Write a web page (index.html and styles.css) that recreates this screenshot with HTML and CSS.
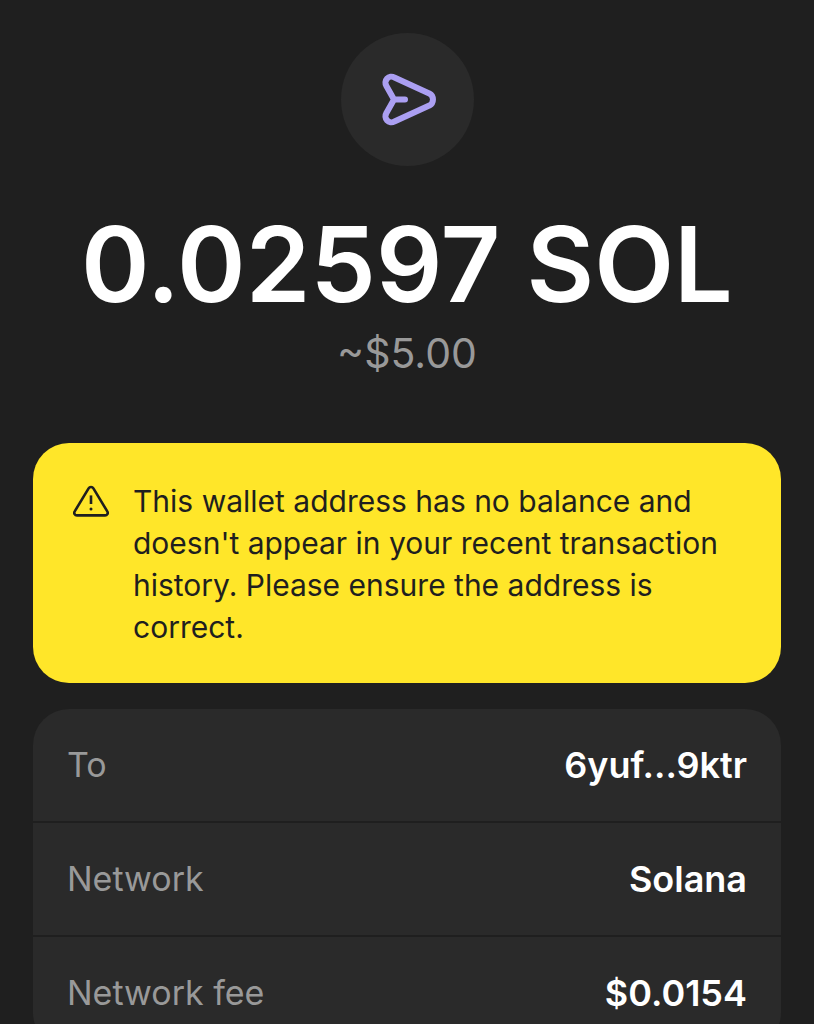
FILE: index.html
```html
<!DOCTYPE html>
<html lang="en">
<head>
<meta charset="utf-8">
<meta name="viewport" content="width=device-width, initial-scale=1">
<title>Send SOL</title>
<link rel="stylesheet" href="styles.css">
</head>
<body>
<main class="send">
  <div class="badge">
    <svg class="badge-icon" viewBox="0 0 60 60" aria-hidden="true">
      <path d="M17 29.500L9.400 16A6 6 0 0 1 17.400 7.500L52.300 23.400A6.900 6.900 0 0 1 52.300 35.600L17.400 51.500A6 6 0 0 1 9.400 43ZM17 29.500H28"/>
    </svg>
  </div>
  <h1 class="amount">0.02597 SOL</h1>
  <p class="fiat">~$5.00</p>
  <section class="warning" role="alert">
    <svg class="warning-icon" viewBox="0 0 36 36" aria-hidden="true">
      <path d="M15.600 4.400A2.800 2.800 0 0 1 20.400 4.400L34.300 27.400A2.600 2.600 0 0 1 32.100 31.400H3.900A2.600 2.600 0 0 1 1.700 27.400Z"/>
      <path class="mark" d="M18 11.400V20"/>
      <circle cx="18" cy="25" r="1.500"/>
    </svg>
    <p class="warning-text">This wallet address has no balance and doesn't appear in your recent transaction history. Please ensure the address is correct.</p>
  </section>
  <dl class="details">
    <div class="row"><dt>To</dt><dd>6yuf...9ktr</dd></div>
    <div class="row"><dt>Network</dt><dd>Solana</dd></div>
    <div class="row"><dt>Network fee</dt><dd>$0.0154</dd></div>
  </dl>
</main>
</body>
</html>
```

FILE: styles.css
```css
* { box-sizing: border-box; }
html { background: #1f1f1f; overflow: hidden; }
body { margin: 0; font-family: Inter, "Liberation Sans", sans-serif; color: #fff; }
.send { display: flex; flex-direction: column; align-items: center; padding: 33px 33px 0; }
.badge { display: grid; place-items: center; width: 133px; height: 133px; border-radius: 50%; background: #2a2a2a; }
.badge-icon { width: 60px; height: 60px; fill: none; stroke: #ab9ff2; stroke-width: 6; stroke-linecap: round; stroke-linejoin: round; }
.amount { margin: 33px 0 0; font-size: 104px; line-height: 130px; font-weight: 600; white-space: nowrap; }
.fiat { margin: 0; font-size: 41px; line-height: 48px; color: #999; }
.warning { display: flex; align-items: flex-start; gap: 24px; width: 100%; margin-top: 66px; padding: 37px 40px 35px; border-radius: 36px; background: #ffe629; color: #1f1f1f; }
.warning-icon { flex: none; width: 36px; height: 36px; margin-top: 4px; fill: none; stroke: #1f1f1f; stroke-width: 2.6; stroke-linecap: round; stroke-linejoin: round; }
.warning-icon .mark { stroke-linecap: butt; }
.warning-icon circle { fill: #1f1f1f; stroke: none; }
.warning-text { margin: 0; font-size: 30px; line-height: 42px; }
.details { width: 100%; margin: 26px 0 0; border-radius: 36px; background: #2a2a2a; }
.row { display: flex; justify-content: space-between; align-items: center; height: 114px; padding: 0 34px; border-bottom: 2px solid #1f1f1f; font-size: 36px; line-height: 44px; }
.row:last-child { border-bottom: 0; height: 112px; }
.row dt { color: #999; font-size: 34px; }
.row dd { margin: 0; font-weight: 600; }
```
